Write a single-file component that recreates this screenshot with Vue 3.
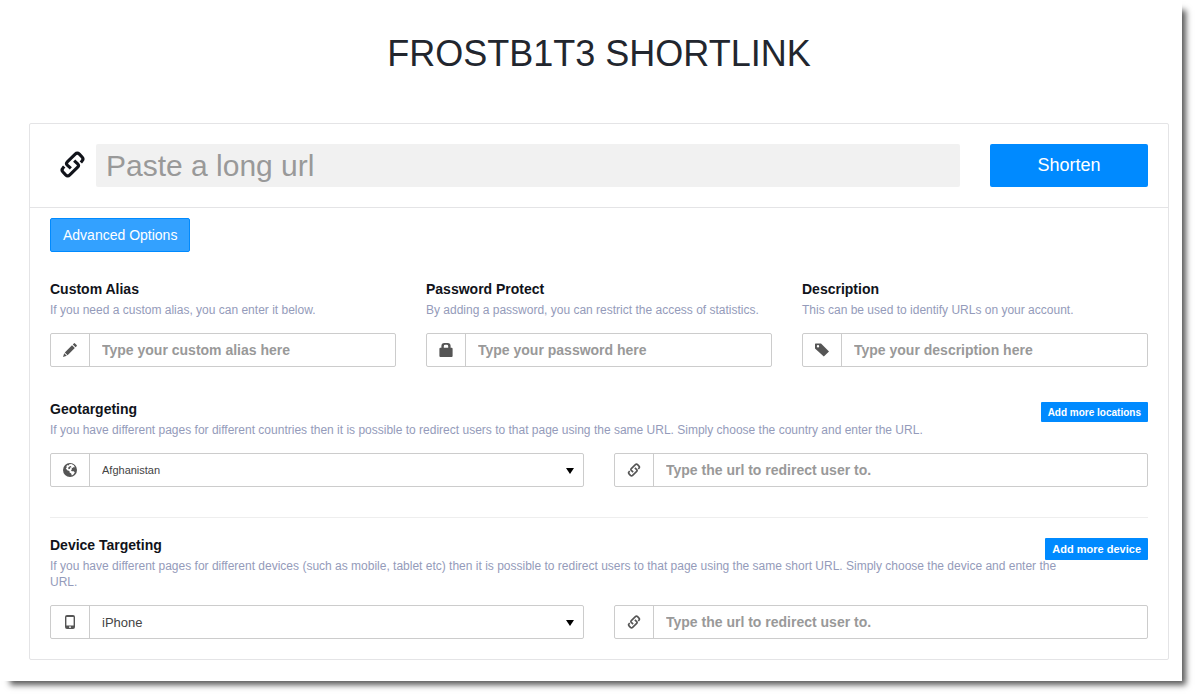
<script setup>
import { ref } from 'vue'

const longUrl = ref('')
const country = ref('Afghanistan')
const device = ref('iPhone')
const countries = ['Afghanistan', 'Albania', 'Algeria', 'Andorra']
const devices = ['iPhone', 'iPad', 'Android', 'Windows Phone']
const options = [
  { id: 'alias', title: 'Custom Alias', help: 'If you need a custom alias, you can enter it below.', hint: 'Type your custom alias here', type: 'text' },
  { id: 'password', title: 'Password Protect', help: 'By adding a password, you can restrict the access of statistics.', hint: 'Type your password here', type: 'password' },
  { id: 'description', title: 'Description', help: 'This can be used to identify URLs on your account.', hint: 'Type your description here', type: 'text' },
]
</script>

<template>
  <div class="sheet">
    <svg class="defs" aria-hidden="true">
      <symbol id="i-link" viewBox="0 0 24 26">
        <g fill="none" stroke="currentColor" stroke-width="3">
          <path d="M20 11 L21.2 9.6 Q23 7.8 21.2 5.8 L18.6 3 Q16.6 1 14.6 3 L7 10.4 Q5.4 12 7 13.6 L10.4 16.8" />
          <path d="M4 15 L2.8 16.4 Q1 18.2 2.8 20.2 L5.4 23 Q7.4 25 9.4 23 L17 15.6 Q18.6 14 17 12.4 L13.6 9.2" />
        </g>
      </symbol>
      <symbol id="i-alias" viewBox="0 0 14 14">
        <path fill="currentColor" d="M0 14 L1.2 10.2 L3.8 12.8 Z M1.8 9.4 L9 2.2 L11.8 5 L4.6 12.2 Z M9.8 1.4 L10.8 .4 Q11.4 -.2 12 .4 L13.6 2 Q14.2 2.6 13.6 3.2 L12.6 4.2 Z" />
      </symbol>
      <symbol id="i-password" viewBox="0 0 14 14">
        <path fill="currentColor" fill-rule="evenodd" d="M2.4 4.8 V3 Q2.4 0 5.4 0 H8.6 Q11.6 0 11.6 3 V4.8 H12.6 Q13.6 4.8 13.6 5.8 V13 Q13.6 14 12.6 14 H1.4 Q.4 14 .4 13 V5.8 Q.4 4.8 1.4 4.8 Z M4.8 4.8 H9.2 V3.2 Q9.2 1.8 7.8 1.8 H6.2 Q4.8 1.8 4.8 3.2 Z" />
      </symbol>
      <symbol id="i-description" viewBox="0 0 14 14">
        <path fill="currentColor" fill-rule="evenodd" d="M0 1 Q0 .4 .6 .4 L6 .4 L14 8.4 L8.8 13.6 L0 5.6 Z M3 2 A1.2 1.2 0 1 0 3 4.4 A1.2 1.2 0 1 0 3 2 Z" />
      </symbol>
      <symbol id="i-globe" viewBox="0 0 14 14">
        <circle cx="7" cy="7" r="7" fill="currentColor" />
        <path fill="#fff" d="M6.2 1.2 L8.4 1 L10.8 2.2 L12 4.4 L10.8 4 L9.6 5 L8.4 4.4 L9 6 L8 7.4 L8.8 8.2 L10.8 8.2 L11.8 9.4 L10.4 11.6 L8.8 12.6 L8.2 10.6 L6.6 9.4 L6.4 8 L4.2 7.2 L2.8 5.2 L3.8 4.6 L3.4 3 L4.8 2 L6 2.6 Z" />
        <path fill="currentColor" d="M6 3.8 L7.4 3 L8.4 3.4 L7.4 4.4 L7 5.8 L5.8 6.2 L5 5 Z" />
      </symbol>
      <symbol id="i-phone" viewBox="0 0 14 14">
        <path fill="currentColor" fill-rule="evenodd" d="M4 0 H10 Q12 0 12 2 V12 Q12 14 10 14 H4 Q2 14 2 12 V2 Q2 0 4 0 Z M3.4 2 V10.4 H10.6 V2 Z M6 11.4 V12.8 H8 V11.4 Z" />
      </symbol>
    </svg>

    <h1>FROSTB1T3 SHORTLINK</h1>

    <form class="panel" @submit.prevent>
      <div class="main-row">
        <label class="main-icon" for="long-url" aria-label="Long url">
          <svg><use href="#i-link" /></svg>
        </label>
        <input id="long-url" v-model="longUrl" class="main-input" type="text" placeholder="Paste a long url" />
        <button class="shorten" type="submit">Shorten</button>
      </div>

      <div class="body">
        <button class="advanced" type="button">Advanced Options</button>

        <div class="columns three">
          <section v-for="o in options" :key="o.id">
            <h2><label :for="o.id">{{ o.title }}</label></h2>
            <p>{{ o.help }}</p>
            <div class="group">
              <span class="addon"><svg><use :href="'#i-' + o.id" /></svg></span>
              <input :id="o.id" :type="o.type" :placeholder="o.hint" />
            </div>
          </section>
        </div>

        <section class="target">
          <button class="add small" type="button">Add more locations</button>
          <h2><label for="country">Geotargeting</label></h2>
          <p>If you have different pages for different countries then it is possible to redirect users to that page using the same URL. Simply choose the country and enter the URL.</p>
          <div class="columns two">
            <div class="group">
              <span class="addon"><svg><use href="#i-globe" /></svg></span>
              <select id="country" v-model="country" class="compact">
                <option v-for="c in countries" :key="c">{{ c }}</option>
              </select>
              <span class="caret"></span>
            </div>
            <div class="group">
              <label class="addon" for="geo-url" aria-label="Country redirect url"><svg><use href="#i-link" /></svg></label>
              <input id="geo-url" type="text" placeholder="Type the url to redirect user to." />
            </div>
          </div>
        </section>

        <hr />

        <section class="target">
          <button class="add" type="button">Add more device</button>
          <h2><label for="device">Device Targeting</label></h2>
          <p>If you have different pages for different devices (such as mobile, tablet etc) then it is possible to redirect users to that page using the same short URL. Simply choose the device and enter the URL.</p>
          <div class="columns two">
            <div class="group">
              <span class="addon"><svg><use href="#i-phone" /></svg></span>
              <select id="device" v-model="device">
                <option v-for="d in devices" :key="d">{{ d }}</option>
              </select>
              <span class="caret"></span>
            </div>
            <div class="group">
              <label class="addon" for="device-url" aria-label="Device redirect url"><svg><use href="#i-link" /></svg></label>
              <input id="device-url" type="text" placeholder="Type the url to redirect user to." />
            </div>
          </div>
        </section>
      </div>
    </form>
  </div>
</template>

<style>
body {
  background: #fff;
}
</style>

<style scoped>
* {
  box-sizing: border-box;
}
.sheet {
  margin: 0 15px 15px 0;
  padding: 32px 13px 21px 29px;
  background: #fff;
  box-shadow: 7px 7px 6px -3px rgba(0, 0, 0, 0.65);
  font-family: "Liberation Sans", Arial, sans-serif;
  color: #11131a;
}
.defs {
  position: absolute;
  width: 0;
  height: 0;
}
h1 {
  margin: 0 0 48px;
  font-size: 36px;
  line-height: 43px;
  font-weight: 400;
  text-align: center;
  color: #22262e;
}
.panel {
  border: 1px solid #e4e4e6;
  border-radius: 2px;
}
.main-row {
  display: flex;
  align-items: center;
  padding: 20px 20px 20px 30px;
  border-bottom: 1px solid #e4e4e6;
}
.main-icon {
  width: 36px;
  padding-bottom: 3px;
}
.main-icon svg {
  display: block;
  width: 25px;
  height: 27px;
}
input,
select,
button {
  margin: 0;
  font-family: inherit;
  outline: none;
}
.main-input {
  flex: 1;
  min-width: 0;
  height: 43px;
  padding: 0 10px;
  border: 0;
  border-radius: 2px;
  background: #f1f1f1;
  font-size: 30px;
}
::placeholder {
  color: #999;
  opacity: 1;
}
.shorten {
  width: 158px;
  height: 43px;
  margin-left: 30px;
  padding: 0;
  border: 0;
  border-radius: 2px;
  background: #008aff;
  color: #fff;
  font-size: 18px;
}
.body {
  padding: 10px 20px 20px;
}
.advanced {
  display: block;
  height: 34px;
  padding: 0 12px;
  border: 1px solid #008aff;
  border-radius: 2px;
  background: #33a1ff;
  color: #fff;
  font-size: 14px;
}
.columns {
  display: grid;
  gap: 30px;
}
.three {
  grid-template-columns: repeat(3, 1fr);
  margin: 27px 0 32px;
}
.two {
  grid-template-columns: repeat(2, 1fr);
}
h2 {
  margin: 0;
  font-size: 14px;
  line-height: 20px;
  font-weight: 700;
}
p {
  margin: 3px 0 15px;
  font-size: 12px;
  line-height: 16px;
  color: #949bba;
}
.group {
  position: relative;
  display: flex;
  height: 34px;
  border: 1px solid #ccc;
  border-radius: 2px;
}
.addon {
  display: flex;
  flex: 0 0 39px;
  align-items: center;
  justify-content: center;
  border-right: 1px solid #ccc;
  color: #555;
}
.addon svg {
  width: 14px;
  height: 14px;
}
.group input,
.group select {
  flex: 1;
  min-width: 0;
  padding: 0 12px;
  border: 0;
  background: transparent;
  font-size: 14px;
  color: #444;
}
.group input {
  font-weight: 700;
}
.group select {
  appearance: none;
  font-size: 13px;
}
.group select.compact {
  font-size: 11px;
}
.caret {
  position: absolute;
  top: 14px;
  right: 9px;
  border: 4px solid transparent;
  border-top: 6px solid #000;
  border-bottom: 0;
  pointer-events: none;
}
.target {
  display: flow-root;
}
.target p {
  padding-right: 80px;
}
.add {
  float: right;
  height: 22px;
  margin: 3px 0 -2px 12px;
  padding: 0 7px;
  border: 0;
  border-radius: 1px;
  background: #008aff;
  color: #fff;
  font-size: 11px;
  font-weight: 700;
}
.add.small {
  height: 20px;
  font-size: 10px;
}
hr {
  height: 1px;
  margin: 30px 0 17px;
  border: 0;
  background: #eee;
}
</style>
